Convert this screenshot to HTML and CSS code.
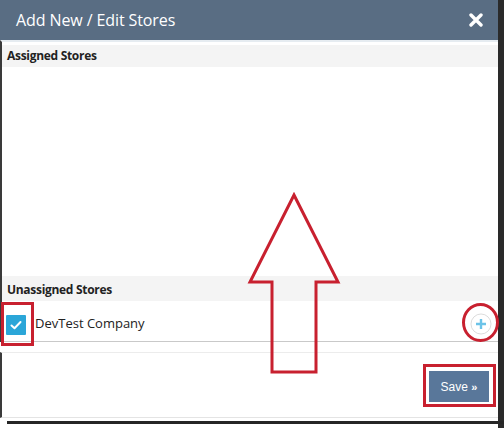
FILE: index.html
```html
<!DOCTYPE html>
<html lang="en">
<head>
    <meta charset="UTF-8">
    <title>Add New / Edit Stores</title>
    <link rel="stylesheet" href="styles.css">
</head>
<body>
    <div class="modal">
        <div class="modal-header">
            <span class="modal-title">Add New / Edit Stores</span>
            <svg class="close" width="14" height="14" viewBox="0 0 14 14">
                <path d="M2 2 L12 12 M12 2 L2 12" stroke="white" stroke-width="3.4" stroke-linecap="round"/>
            </svg>
        </div>
        <div class="modal-body">
            <div class="section-title first">Assigned Stores</div>
            <div class="assigned-list"></div>
            <div class="section-title second">Unassigned Stores</div>
            <div class="store-row">
                <span class="check">
                    <svg width="20" height="20" viewBox="0 0 20 20">
                        <path d="M5.5 10.5 L8.5 13.2 L14.5 7" stroke="white" stroke-width="2" fill="none" stroke-linecap="round" stroke-linejoin="round"/>
                    </svg>
                </span>
                <span class="store-name">DevTest Company</span>
                <span class="add-btn">
                    <svg width="22" height="22" viewBox="0 0 22 22">
                        <circle cx="11" cy="11" r="10" fill="white" stroke="#dcdcdc" stroke-width="1"/>
                        <path d="M11 6 V16 M6 11 H16" stroke="#6cc3e8" stroke-width="2.4"/>
                    </svg>
                </span>
            </div>
        </div>
        <div class="modal-footer">
            <button class="save-btn" type="button">Save <span class="chev">&raquo;</span></button>
        </div>
        <div class="bottom-bar"></div>

        <!-- annotations drawn over the screenshot -->
        <div class="mark mark-check"></div>
        <div class="mark mark-save"></div>
        <div class="mark mark-plus"></div>
        <svg class="arrow" width="96" height="184" viewBox="0 0 96 184">
            <polygon points="48,3 92,90 70,90 70,180 26,180 26,90 4,90" fill="none" stroke="#c8202f" stroke-width="3" stroke-linejoin="miter"/>
        </svg>
    </div>
</body>
</html>
```

FILE: styles.css
```css
html, body {
    margin: 0;
    padding: 0;
}

body {
    background-color: #2a2a2a;
    width: 504px;
    height: 428px;
    overflow: hidden;
    font-family: "Open Sans", "Noto Sans", sans-serif;
}

.modal {
    position: relative;
    width: 498px;
    height: 428px;
    background-color: white;
}

.modal-header {
    height: 40px;
    background-color: #596d83;
    display: flex;
    align-items: center;
    justify-content: space-between;
    padding: 0 15px 0 16px;
}

.modal-title {
    color: white;
    font-size: 16px;
    letter-spacing: -0.1px;
}

.close {
    display: block;
}

.modal-body {
    border-left: 2px solid #3a3a3a;
    border-top: 2px solid #e6ecf1;
    padding-top: 3px;
}

.section-title {
    background-color: #f4f4f4;
    font-size: 12px;
    font-weight: bold;
    color: #222;
    padding-left: 5px;
    letter-spacing: -0.3px;
}

.section-title.first {
    height: 22px;
    line-height: 22px;
}

.section-title.second {
    height: 25px;
    line-height: 27px;
}

.assigned-list {
    height: 209px;
}

.store-row {
    height: 36px;
    display: flex;
    align-items: center;
    border-bottom: 1px solid #c9c9c9;
    padding: 4px 6px 0 4px;
}

.check {
    width: 20px;
    height: 20px;
    background-color: #2ba6d8;
    border-radius: 1px;
    margin-top: 3px;
}

.check svg {
    display: block;
}

.store-name {
    font-size: 13px;
    color: #222;
    margin-left: 9px;
    flex: 1;
}

.add-btn svg {
    display: block;
    margin-top: 2px;
}

.modal-footer {
    border-left: 2px solid #3a3a3a;
    border-top: 1px solid #ececec;
    border-bottom: 1px solid #e4e4e4;
    margin-top: 10px;
    height: 66px;
    box-sizing: border-box;
    display: flex;
    justify-content: flex-end;
    align-items: flex-start;
    padding: 18px 9px 0 0;
}

.save-btn {
    width: 60px;
    height: 31px;
    background-color: #59779a;
    color: white;
    border: none;
    font-family: "Liberation Sans", Arial, sans-serif;
    font-size: 12px;
    padding: 0;
}

.chev {
    font-size: 11px;
    font-weight: bold;
}

.bottom-bar {
    margin: 3px 0 0 7px;
    width: 497px;
    height: 3px;
    background-color: #262626;
}

.mark {
    position: absolute;
    border: 3px solid #c8202f;
}

.mark-check {
    left: 1px;
    top: 302px;
    width: 27px;
    height: 38px;
}

.mark-save {
    left: 423px;
    top: 364px;
    width: 67px;
    height: 37px;
}

.mark-plus {
    left: 462px;
    top: 303px;
    width: 31px;
    height: 33px;
    border-radius: 50%;
}

.arrow {
    position: absolute;
    left: 246px;
    top: 192px;
}
```
